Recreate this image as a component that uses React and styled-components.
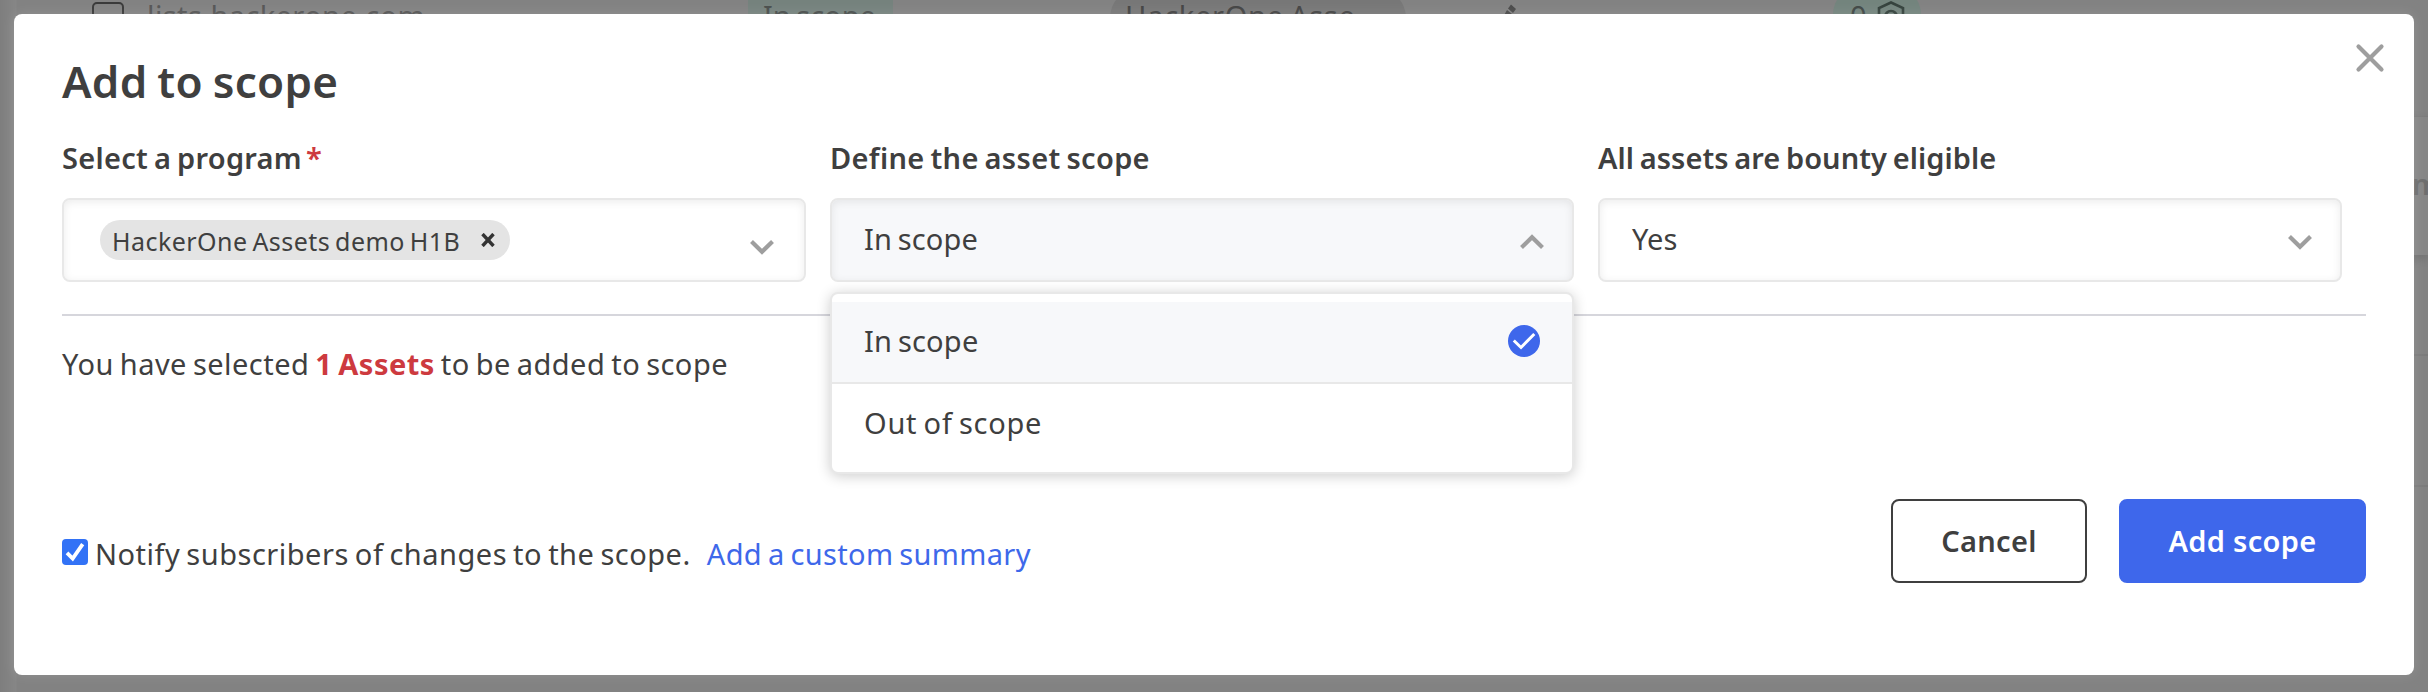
import React from "react";
import styled, { createGlobalStyle } from "styled-components";

const GlobalStyle = createGlobalStyle`
  *, *::before, *::after { box-sizing: border-box; }
  body { margin: 0; background: #828282; }
  button { font: inherit; cursor: pointer; }
`;

const Page = styled.div`
  position: relative;
  height: 692px;
  overflow: hidden;
  color: #3f3f3f;
  font: 400 29px/40px "Noto Sans", sans-serif;
  word-spacing: -2px;
  background: linear-gradient(90deg, #7e7e7e 0, #868686 16px, #828282 17px, #828282 100%);
`;

/* Dimmed asset table behind the dialog */
const AssetRow = styled.div`
  display: grid;
  grid-template-columns: 55px 601px 362px 390px 333px 1fr;
  height: 32px;
  padding-left: 92px;
  color: #565656;
`;

const RowCheckbox = styled.span`
  width: 32px;
  height: 32px;
  margin-top: 2px;
  border: 2px solid #3a3a3a;
  border-radius: 5px;
`;

const AssetName = styled.span`
  margin-top: -4px;
  letter-spacing: 0.4px;
`;

const ScopeTag = styled.span`
  width: 145px;
  height: 36px;
  margin-top: -4px;
  padding-left: 15px;
  color: #4a4f4d;
  background: #75827d;
`;

const ProgramPill = styled.span`
  width: 296px;
  height: 60px;
  margin-top: -12px;
  padding: 8px 0 0 15px;
  border-radius: 30px;
  color: #444;
  letter-spacing: 0.7px;
  background: #777;
`;

const CountPill = styled.span`
  display: flex;
  width: 88px;
  height: 52px;
  margin-top: -12px;
  padding: 8px 0 0 17px;
  gap: 10px;
  border-radius: 26px;
  color: #414846;
  background: #73847d;
  svg { margin-top: 5px; }
`;

const SideTable = styled.div`
  width: 22px;
  margin: 84px 0 0 auto;
`;

const SideHeader = styled.div`
  height: 139px;
  padding: 47px 0 0 6px;
  overflow: hidden;
  border-top: 1px solid #7c7c7c;
  color: #6e6e6e;
  font-weight: 600;
  background: #868686;
  box-shadow: 0 4px 10px rgba(0, 0, 0, 0.14);
`;

const SideRow = styled.div`
  height: ${(p) => p.$height}px;
  border-bottom: 2px solid #7b7b7b;
`;

const Dialog = styled.section`
  position: absolute;
  inset: 14px 14px 17px;
  padding: 37px 48px 0;
  border-radius: 8px;
  background: #fff;
  box-shadow: 0 0 14px rgba(255, 255, 255, 0.13);
`;

const CloseButton = styled.button`
  position: absolute;
  top: 28px;
  right: 28px;
  display: flex;
  padding: 0;
  border: 0;
  background: none;
`;

const Title = styled.h1`
  margin: 0 0 32px;
  font-size: 44px;
  font-weight: 600;
  line-height: 60px;
  letter-spacing: 0.3px;
`;

const Fields = styled.div`
  display: grid;
  grid-template-columns: repeat(3, 744px);
  gap: 24px;
`;

const Field = styled.div`
  position: relative;
`;

const Label = styled.div`
  height: 30px;
  margin-bottom: 25px;
  font-weight: 600;
  line-height: 30px;
  letter-spacing: ${(p) => p.$tracking}px;
`;

const Required = styled.span`
  margin-left: 4px;
  color: #cd3a3f;
`;

const SelectBox = styled.div`
  display: flex;
  align-items: center;
  justify-content: space-between;
  height: 84px;
  padding: 0 28px 2px 32px;
  border: 2px solid #e8e8e8;
  border-radius: 8px;
  letter-spacing: 0.15px;
  background: ${(p) => (p.$open ? "#f7f8fa" : "#fff")};
  box-shadow: inset 0 2px 8px rgba(0, 0, 0, 0.08);
  > svg { margin-top: 6px; }
`;

const MultiSelectBox = styled(SelectBox)`
  padding: 0 30px 0 36px;
  > svg { margin-top: 13px; }
`;

const Chip = styled.span`
  display: flex;
  align-items: center;
  justify-content: space-between;
  width: 410px;
  height: 40px;
  padding: 2px 15px 0 12px;
  border-radius: 20px;
  font-size: 25px;
  line-height: 38px;
  letter-spacing: 0.45px;
  background: #e4e4e4;
  svg { margin-top: -2px; }
`;

const Menu = styled.div`
  position: absolute;
  z-index: 2;
  top: 149px;
  left: 0;
  width: 100%;
  height: 182px;
  padding-top: 8px;
  border: 2px solid #e8e8e8;
  border-radius: 8px;
  background: #fff;
  box-shadow: 0 2px 14px rgba(0, 0, 0, 0.2);
`;

const Option = styled.div`
  display: flex;
  align-items: center;
  justify-content: space-between;
  height: ${(p) => (p.$selected ? 82 : 80)}px;
  padding: 0 32px 2px 32px;
  border-bottom: ${(p) => (p.$selected ? "2px solid #e8e8e8" : "0")};
  letter-spacing: ${(p) => (p.$selected ? 0.2 : 0.75)}px;
  background: ${(p) => (p.$selected ? "#f7f8fa" : "#fff")};
`;

const Divider = styled.hr`
  height: 2px;
  margin: 32px 0 28px;
  border: 0;
  background: #d6d6dc;
`;

const Summary = styled.p`
  margin: 0 0 115px;
  letter-spacing: 0.46px;
`;

const AssetCount = styled.strong`
  color: #cd3a3f;
  font-weight: 700;
`;

const Footer = styled.footer`
  display: flex;
  justify-content: space-between;
`;

const Notify = styled.div`
  display: flex;
  padding-top: 35px;
`;

const Checkbox = styled.span`
  width: 26px;
  height: 26px;
  margin: 5px 7px 0 0;
  border-radius: 4px;
  background: #3272f6;
  svg { display: block; }
`;

const NotifyText = styled.span`
  letter-spacing: 0.5px;
`;

const SummaryLink = styled.a`
  margin-left: 16px;
  color: #3e68ea;
  letter-spacing: 0.35px;
`;

const Actions = styled.div`
  display: flex;
  gap: 32px;
`;

const Button = styled.button`
  width: ${(p) => (p.$primary ? 247 : 196)}px;
  height: 84px;
  padding: 0 0 1px;
  border: 2px solid ${(p) => (p.$primary ? "#3e67eb" : "#3f3f3f")};
  border-radius: 8px;
  color: ${(p) => (p.$primary ? "#fff" : "#3f3f3f")};
  font-weight: 600;
  letter-spacing: 0.3px;
  background: ${(p) => (p.$primary ? "#3e67eb" : "#fff")};
`;

const Chevron = ({ up }) => (
  <svg width="24" height="16" viewBox="0 0 24 16" fill="none" stroke="#9e9e9e" strokeWidth="4.2">
    <path d={up ? "M1.5 13.5 12 3.3l10.5 10.2" : "M1.5 2.5 12 12.7 22.5 2.5"} />
  </svg>
);

export default function App() {
  return (
    <>
      <GlobalStyle />
      <Page>
        <AssetRow>
          <RowCheckbox />
          <AssetName>lists.hackerone.com</AssetName>
          <ScopeTag>In scope</ScopeTag>
          <ProgramPill>HackerOne Asse...</ProgramPill>
          <svg width="28" height="28" viewBox="0 0 28 28" fill="#4a4a4a">
            <path d="m11 4.500 5 4.500-3 4-5-4.500zM7 10l5 4-6 9-5 2 1-6z" />
          </svg>
          <CountPill>
            0
            <svg width="28" height="32" viewBox="0 0 28 32" fill="none" stroke="#35423d" strokeWidth="2.6">
              <path d="M14 1.500 2 7v11c0 6 6 10 12 13 6-3 12-7 12-13V7z" />
              <circle cx="14" cy="16" r="6" />
            </svg>
          </CountPill>
        </AssetRow>
        <SideTable>
          <SideHeader>m</SideHeader>
          <SideRow $height={101} />
          <SideRow $height={131} />
        </SideTable>

        <Dialog role="dialog">
          <CloseButton aria-label="Close">
            <svg width="32" height="32" viewBox="0 0 32 32" stroke="#9e9e9e" strokeWidth="4.2" strokeLinecap="round">
              <path d="M4.500 4.500 27.500 27.500M27.500 4.500 4.500 27.500" />
            </svg>
          </CloseButton>
          <Title>Add to scope</Title>
          <Fields>
            <Field>
              <Label $tracking={0.28}>
                Select a program<Required>*</Required>
              </Label>
              <MultiSelectBox>
                <Chip>
                  HackerOne Assets demo H1B
                  <svg width="14" height="14" viewBox="0 0 14 14" stroke="#333" strokeWidth="3.4">
                    <path d="m1.500 1 11 12M12.500 1l-11 12" />
                  </svg>
                </Chip>
                <Chevron />
              </MultiSelectBox>
            </Field>
            <Field>
              <Label $tracking={0.33}>Define the asset scope</Label>
              <SelectBox $open>
                In scope
                <Chevron up />
              </SelectBox>
              <Menu>
                <Option $selected>
                  In scope
                  <svg width="32" height="32" viewBox="0 0 32 32" fill="none">
                    <circle cx="16" cy="16" r="16" fill="#3e67eb" />
                    <path d="m5.800 15.500 7.200 7L26.300 9" stroke="#fff" strokeWidth="3" />
                  </svg>
                </Option>
                <Option>Out of scope</Option>
              </Menu>
            </Field>
            <Field>
              <Label $tracking={0.06}>All assets are bounty eligible</Label>
              <SelectBox>
                Yes
                <Chevron />
              </SelectBox>
            </Field>
          </Fields>
          <Divider />
          <Summary>
            You have selected <AssetCount>1 Assets</AssetCount> to be added to scope
          </Summary>
          <Footer>
            <Notify>
              <Checkbox>
                <svg width="26" height="26" viewBox="0 0 26 26" fill="none" stroke="#fff" strokeWidth="3.8">
                  <path d="m5 13.800 5.700 5.700L20.700 5.200" />
                </svg>
              </Checkbox>
              <NotifyText>Notify subscribers of changes to the scope.</NotifyText>
              <SummaryLink>Add a custom summary</SummaryLink>
            </Notify>
            <Actions>
              <Button>Cancel</Button>
              <Button $primary>Add scope</Button>
            </Actions>
          </Footer>
        </Dialog>
      </Page>
    </>
  );
}
